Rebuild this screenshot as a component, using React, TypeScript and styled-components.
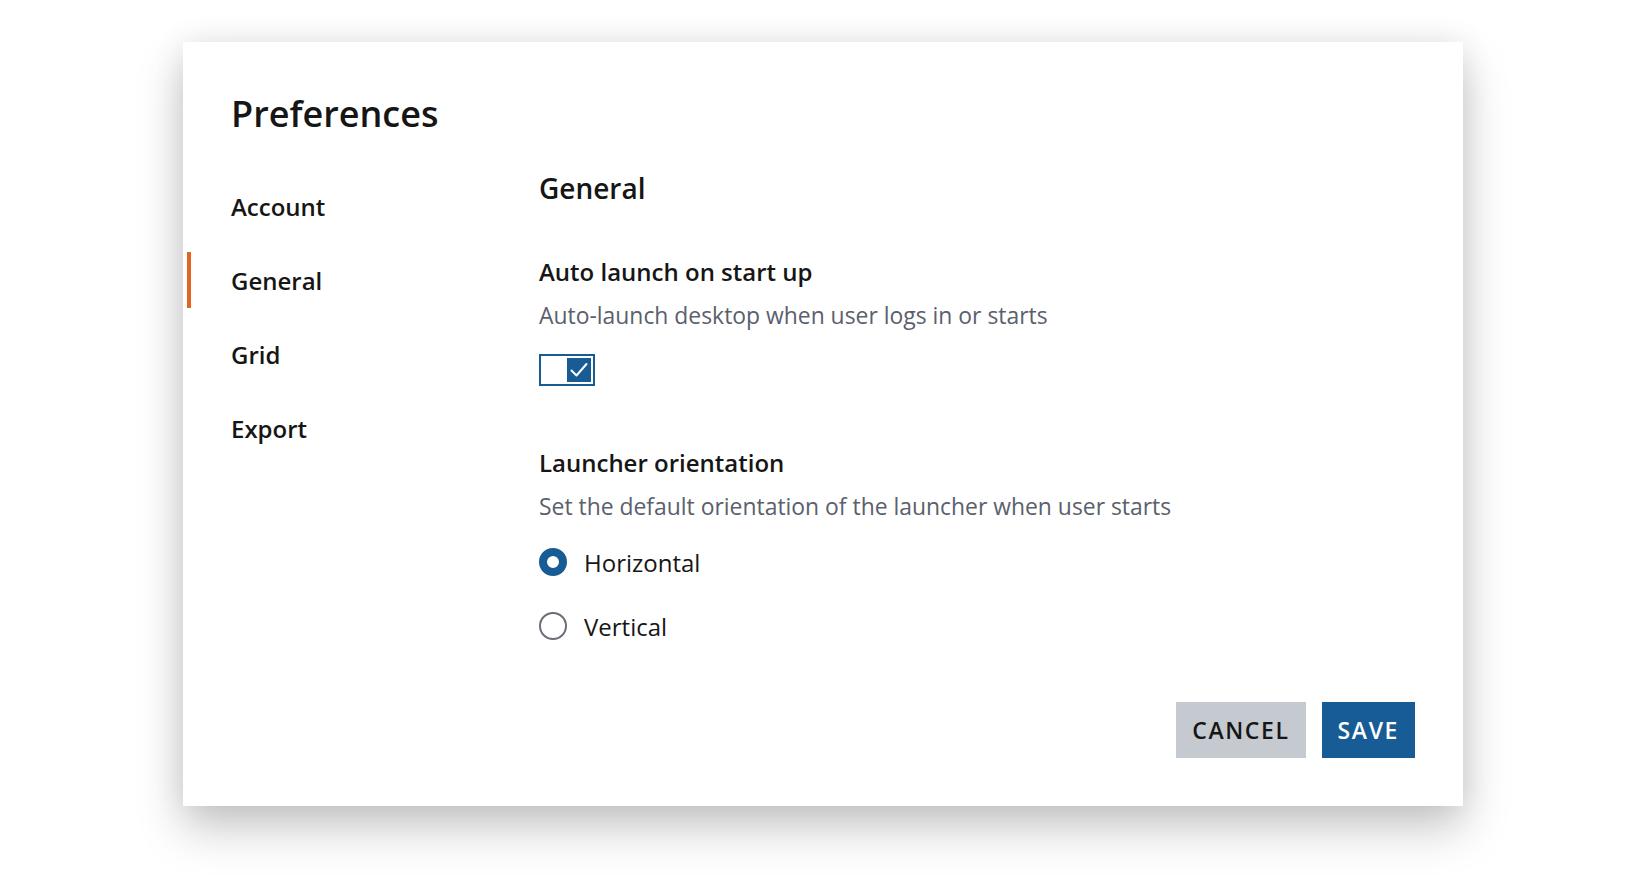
import React, { useState } from "react";
import styled, { createGlobalStyle } from "styled-components";

const GlobalStyle = createGlobalStyle`
  html, body { margin: 0; padding: 0; background: #ffffff; }
  body { font-family: "Open Sans", "Noto Sans", Arial, sans-serif; color: #161616; }
  * { box-sizing: border-box; }
`;

const Page = styled.div`
  width: 1644px;
  height: 895px;
  padding: 42px 0 0 2px;
  display: flex;
  justify-content: center;
  align-items: flex-start;
`;

const Dialog = styled.div`
  width: 1280px;
  height: 764px;
  background: #ffffff;
  box-shadow: 0 22px 44px rgba(0, 0, 0, 0.22), 0 0 30px rgba(0, 0, 0, 0.08);
  padding: 48px;
  display: flex;
  flex-direction: column;
`;

const Title = styled.h1`
  margin: 0;
  font-size: 36px;
  line-height: 48px;
  font-weight: 600;
  color: #161616;
`;

const Body = styled.div`
  display: flex;
  flex: 1;
  margin-top: 32px;
`;

const Nav = styled.nav`
  width: 352px;
  margin-left: -44px;
  padding-top: 8px;
  display: flex;
  flex-direction: column;
  gap: 18px;
`;

const NavItem = styled.div<{ $active?: boolean }>`
  height: 56px;
  display: flex;
  align-items: center;
  padding-left: 40px;
  border-left: 4px solid ${(p) => (p.$active ? "#e0651f" : "transparent")};
  font-size: 24px;
  font-weight: 600;
  color: #161616;
  cursor: pointer;
`;

const Content = styled.div`
  flex: 1;
  display: flex;
  flex-direction: column;
`;

const SectionTitle = styled.h2`
  margin: 0;
  font-size: 28px;
  line-height: 36px;
  font-weight: 600;
  color: #161616;
`;

const Setting = styled.div<{ $top: number }>`
  margin-top: ${(p) => p.$top}px;
  display: flex;
  flex-direction: column;
`;

const SettingTitle = styled.h3`
  margin: 0;
  font-size: 24px;
  line-height: 32px;
  font-weight: 600;
  color: #161616;
`;

const SettingDesc = styled.p`
  margin: 12px 0 0;
  font-size: 22.9px;
  line-height: 32px;
  font-weight: 400;
  color: #5a606c;
`;

const Toggle = styled.button<{ $on: boolean }>`
  margin-top: 22px;
  width: 56px;
  height: 32px;
  padding: 2px;
  border: 2px solid #175c94;
  background: #ffffff;
  display: flex;
  justify-content: ${(p) => (p.$on ? "flex-end" : "flex-start")};
  cursor: pointer;
`;

const Knob = styled.span<{ $on: boolean }>`
  width: 24px;
  height: 24px;
  background: ${(p) => (p.$on ? "#175c94" : "#8a8f96")};
  display: flex;
  align-items: center;
  justify-content: center;
`;

const RadioGroup = styled.div`
  margin-top: 19px;
  display: flex;
  flex-direction: column;
  gap: 24px;
`;

const RadioRow = styled.label`
  height: 40px;
  display: flex;
  align-items: center;
  gap: 17px;
  font-size: 24px;
  font-weight: 400;
  color: #161616;
  cursor: pointer;
`;

const RadioDot = styled.span<{ $checked: boolean }>`
  width: 28px;
  height: 28px;
  border-radius: 50%;
  border: ${(p) => (p.$checked ? "8px solid #175c94" : "2px solid #6a6e78")};
  background: #ffffff;
  flex-shrink: 0;
`;

const Footer = styled.div`
  display: flex;
  justify-content: flex-end;
  gap: 16px;
`;

const Button = styled.button<{ $primary?: boolean }>`
  height: 56px;
  padding: 0 16px;
  border: none;
  font-family: "Open Sans", "Noto Sans", Arial, sans-serif;
  font-size: 23px;
  font-weight: 600;
  letter-spacing: 1.6px;
  background: ${(p) => (p.$primary ? "#175c94" : "#c5c9d0")};
  color: ${(p) => (p.$primary ? "#ffffff" : "#161616")};
  cursor: pointer;
`;

export default function App() {
  const [on, setOn] = useState(true);
  const [orientation, setOrientation] = useState("horizontal");
  const navItems = ["Account", "General", "Grid", "Export"];

  return (
    <>
      <GlobalStyle />
      <Page>
        <Dialog>
          <Title>Preferences</Title>
          <Body>
            <Nav>
              {navItems.map((n) => (
                <NavItem key={n} $active={n === "General"}>
                  {n}
                </NavItem>
              ))}
            </Nav>
            <Content>
              <SectionTitle>General</SectionTitle>
              <Setting $top={50}>
                <SettingTitle>Auto launch on start up</SettingTitle>
                <SettingDesc>Auto-launch desktop when user logs in or starts</SettingDesc>
                <div>
                  <Toggle $on={on} onClick={() => setOn(!on)} aria-label="Auto launch">
                    <Knob $on={on}>
                      <svg width="24" height="24" viewBox="0 0 24 24">
                        <polyline
                          points="4.5,12.5 9.5,17.5 19.5,6"
                          fill="none"
                          stroke="#ffffff"
                          strokeWidth="2"
                          strokeLinecap="round"
                          strokeLinejoin="round"
                        />
                      </svg>
                    </Knob>
                  </Toggle>
                </div>
              </Setting>
              <Setting $top={61}>
                <SettingTitle>Launcher orientation</SettingTitle>
                <SettingDesc>Set the default orientation of the launcher when user starts</SettingDesc>
                <RadioGroup>
                  <RadioRow onClick={() => setOrientation("horizontal")}>
                    <RadioDot $checked={orientation === "horizontal"} />
                    Horizontal
                  </RadioRow>
                  <RadioRow onClick={() => setOrientation("vertical")}>
                    <RadioDot $checked={orientation === "vertical"} />
                    Vertical
                  </RadioRow>
                </RadioGroup>
              </Setting>
            </Content>
          </Body>
          <Footer>
            <Button>CANCEL</Button>
            <Button $primary>SAVE</Button>
          </Footer>
        </Dialog>
      </Page>
    </>
  );
}
